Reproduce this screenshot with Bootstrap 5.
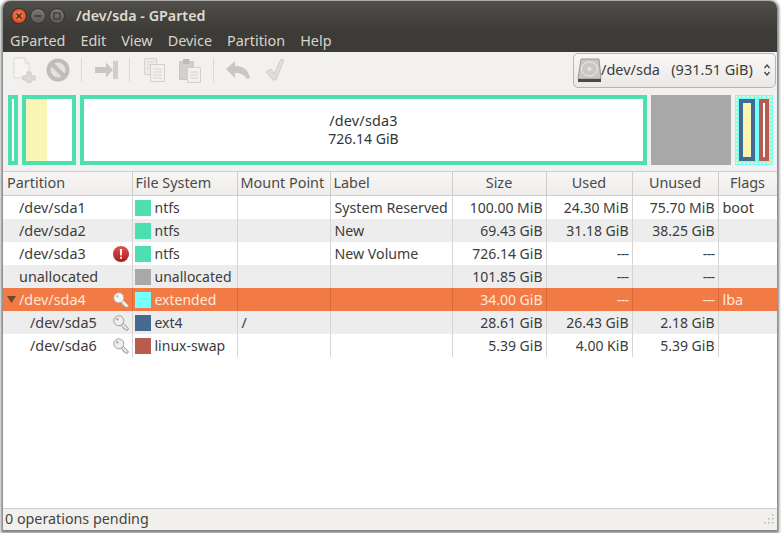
<!DOCTYPE html>
<html lang="en">
<head>
<meta charset="utf-8">
<title>/dev/sda - GParted</title>
<link href="https://cdn.jsdelivr.net/npm/bootstrap@5.3.0/dist/css/bootstrap.min.css" rel="stylesheet">
<style>
html,body{height:100%;}
body{margin:0;background:#fff;font-family:"Noto Sans","Open Sans",sans-serif;font-size:14.4px;overflow:hidden;color:#3c3c3c;}
.desk{height:533px;padding:1px 4px 3px 3px;}
.win{height:529px;background:#f2f1ef;border-radius:7px 7px 0 0;box-shadow:0 1px 3px 2px rgba(0,0,0,.5);overflow:hidden;}
.tbar{height:29px;background:linear-gradient(#514f4a,#3c3b37);color:#dfdbd2;padding-left:8px;}
.ttl{font-weight:600;font-size:14.3px;margin-left:8px;}
.wbtn{display:block;flex:none;margin-right:3px;}
.mbar{height:22px;background:#3c3b37;color:#d8d4ca;padding-left:7px;gap:15px;font-size:14.4px;}
.tools{height:36px;padding-left:10px;}
.tools svg{display:block;flex:none;}
.sepv{width:1px;height:24px;background:#dcdad6;flex:none;}
.m9{margin-left:9px}.m10{margin-left:10px}.m11{margin-left:11px}.m12{margin-left:12px}.m13{margin-left:13px}.m14{margin-left:14px}.m15{margin-left:15px}
.combo{width:203px;height:35px;margin-left:auto;margin-right:1px;border:1px solid #b8b5ae;border-radius:5px;background:linear-gradient(#f8f7f6,#ebe9e6);color:#3c3c3c;padding-left:3px;font-size:14.5px;}
.combo span{margin-left:-1px;}
.dmap{height:83px;padding:7px 0 0 5px;gap:4px;}
.pbox{height:70px;border:4px solid #4edfb0;background:#fff;flex:none;}
.pb1{width:10px}.pb2{width:54px;background:linear-gradient(90deg,#f9f5b4 21px,#fff 21px);}
.pb3{width:567px;line-height:18px;color:#333;padding-bottom:1px;}
.nm{font-size:14.4px;letter-spacing:.2px;}.sz{font-size:14px;}
.pb4{width:80px;background:#a8a8a8;border:0;}
.pb5{width:38px;border-color:#7ff;background:#7ff;gap:4px;padding:0;}
.pb5::before{content:"";position:absolute;inset:-3px;border:2px dotted #f3f0a8;}
.sd5{width:16px;height:62px;border:4px solid #466a8f;background:#f9f5b4;flex:none;}
.sd6{width:10px;height:62px;border:4px solid #b85c4f;background:#fff;flex:none;}
.gtab{background:#fff;margin:0;border-top:1px solid #cfcdc9;}
.gtab table{table-layout:fixed;width:774px;border-collapse:collapse;margin:0;font-size:14.4px;--bs-table-bg:transparent;color:#3c3c3c;}
.gtab th{height:23px;padding:0 3px 2px;font-weight:400;line-height:20px;background:linear-gradient(#f7f6f5,#eeedeb);border-right:1px solid #cfcdc9;border-bottom:1px solid #cfcdc9;color:#4a4a4a;white-space:nowrap;}
.gtab thead tr{height:22px;}
.gtab td{height:23px;padding:2px 3px 0 4px;border:0;border-right:1px solid #d6d5d2;white-space:nowrap;color:#3c3c3c;line-height:1;vertical-align:middle;overflow:hidden;}
.gtab td:has(.cel){padding-top:0;}
.gtab td.text-end{font-size:14px;}
.gtab td.fs{padding-left:2px;font-size:14px;}
.gtab td.lb{font-size:14.2px;}
.gtab tr.alt td{background:#ededed;}
.gtab tr.sel td{background:#f27a45;color:#fde9dc;border-right-color:#d96a3a;}
.gtab .cel{display:flex;align-items:center;height:23px;padding-top:1px;}
.gtab .cel.lvl1,.gtab .cel.lvl2{padding-top:2px;}
.gtab .cel svg.ico-r{margin-top:-1px;}
.lvl1{padding-left:12px;}.lvl2{padding-left:23px;}
.swt{width:16px;height:16px;flex:none;margin-right:4px;}
.dsh{letter-spacing:-.6px;}
.stat{height:22px;border-top:1px solid #cfcec8;background:#f1f0ed;padding:0 3px 2px 2px;font-size:14.3px;color:#444;}
.ico-r{margin-left:auto;flex:none;}
</style>
</head>
<body>
<svg width="0" height="0" class="position-absolute">
  <defs>
    <linearGradient id="redg" x1="0" y1="0" x2="0" y2="1"><stop offset="0" stop-color="#e0524d"/><stop offset="1" stop-color="#a81c1c"/></linearGradient>
    <linearGradient id="btng" x1="0" y1="0" x2="0" y2="1"><stop offset="0" stop-color="#7c7a74"/><stop offset="1" stop-color="#5c5a55"/></linearGradient>
    <radialGradient id="clg" cx=".5" cy=".45" r=".6"><stop offset="0" stop-color="#f58a62"/><stop offset="1" stop-color="#d5401a"/></radialGradient>
    <symbol id="keyw" viewBox="0 0 16 16"><path d="M10.200 8.300l5 4.700-.2 2-2 .3-.8-1-1 .1-.2-1.200-1.100-.2-.1-1.100-2.300-2z" fill="#f2f2f0" stroke="#b0aeaa" stroke-width=".8"/><circle cx="5.800" cy="5.800" r="5" fill="#f6f6f4" stroke="#b0aeaa" stroke-width=".8"/><circle cx="4.200" cy="4.200" r="1.200" fill="#c9c7c3"/></symbol>
    <symbol id="keyg" viewBox="0 0 16 16"><path d="M10.200 8.300l5 4.700-.2 2-2 .3-.8-1-1 .1-.2-1.200-1.100-.2-.1-1.100-2.300-2z" fill="#e4e4e2" stroke="#8f8e8b" stroke-width=".8"/><circle cx="5.800" cy="5.800" r="5" fill="#eeeeec" stroke="#8f8e8b" stroke-width=".8"/><circle cx="4.200" cy="4.200" r="1.200" fill="#a9a8a5"/></symbol>
  </defs>
</svg>
<div class="desk">
<div class="win d-flex flex-column">
  <div class="tbar d-flex align-items-center">
    <svg class="wbtn" width="16" height="16" viewBox="0 0 16 16"><circle cx="8" cy="8" r="7.500" fill="url(#clg)" stroke="#3a2a22"/><path d="M5.500 5.500l5 5M10.500 5.500l-5 5" stroke="#4a2014" stroke-width="1.200"/></svg>
    <svg class="wbtn" width="16" height="16" viewBox="0 0 16 16"><circle cx="8" cy="8" r="7.500" fill="url(#btng)" stroke="#34332f"/><path d="M4.500 8h7" stroke="#3a3935" stroke-width="1.300"/></svg>
    <svg class="wbtn" width="16" height="16" viewBox="0 0 16 16"><circle cx="8" cy="8" r="7.500" fill="url(#btng)" stroke="#34332f"/><rect x="5" y="5" width="6" height="6" fill="none" stroke="#3a3935" stroke-width="1.200"/></svg>
    <span class="ttl">/dev/sda - GParted</span>
  </div>
  <div class="mbar d-flex align-items-center">
    <span>GParted</span><span>Edit</span><span>View</span><span>Device</span><span>Partition</span><span>Help</span>
  </div>
  <div class="tools d-flex align-items-center">
    <svg width="24" height="26" viewBox="0 0 24 26"><path d="M1 1h11l4 5v15H1z" fill="#f6f5f3" stroke="#dbd9d5"/><path d="M12 1v5h4" fill="none" stroke="#dbd9d5"/><path d="M14 15h4v4h4v4h-4v3h-4v-3h-4v-4h4z" fill="#dddbd7" stroke="#cbc9c5"/></svg>
    <svg class="m9" width="24" height="24" viewBox="0 0 24 24"><circle cx="12" cy="12" r="9.500" fill="#e4e2df" stroke="#bfbdb9" stroke-width="4"/><path d="M5.500 5.500l13 13" stroke="#bfbdb9" stroke-width="4"/></svg>
    <span class="sepv m11"></span>
    <svg class="m13" width="24" height="22" viewBox="0 0 24 22"><path d="M0 8h11V3.500l7 7.500-7 7.500V14H0z" fill="#c9c7c3"/><path d="M18 2h5v18h-5z" fill="#d0cec9"/></svg>
    <span class="sepv m10"></span>
    <svg class="m14" width="21" height="24" viewBox="0 0 21 24"><path d="M.5.500h12v16H.5z" fill="#eceae7" stroke="#d6d4cf"/><path d="M3 4h7M3 7h7M3 10h7" stroke="#dad8d3"/><path d="M6.500 6.500h14v17h-14z" fill="#f3f1ef" stroke="#d2d0cb"/><path d="M9 11h9M9 14h9M9 17h9M9 20h9" stroke="#d6d4cf"/></svg>
    <svg class="m14" width="22" height="25" viewBox="0 0 22 25"><path d="M.5 3.500h14v18H.5z" fill="#d3d1cc" stroke="#c9c7c2"/><path d="M4 1h6.500v5H4z" fill="#bdbbb6"/><path d="M8.500 9.500h13v15h-13z" fill="#f3f1ef" stroke="#d2d0cb"/><path d="M11 14h8M11 17h8M11 20h8" stroke="#d6d4cf"/></svg>
    <span class="sepv m12"></span>
    <svg class="m12" width="24" height="20" viewBox="0 0 24 20"><path d="M0 9l9-8v5c8 0 13 3 15 12l-3 1c-3-5-7-6-12-6v5z" fill="#c9c7c3"/></svg>
    <svg class="m15" width="20" height="24" viewBox="0 0 20 24"><path d="M1 14l5-3 3 5 7-15 3 1-8 20h-3z" fill="#e0dedb" stroke="#d0cecb"/></svg>
    <div class="combo d-flex align-items-center">
      <svg width="25" height="25" viewBox="0 0 25 25"><path d="M4 1h18l2 20H1z" fill="#c9c8c5" stroke="#9a9996"/><ellipse cx="12.500" cy="11" rx="8" ry="7" fill="none" stroke="#eee"/><circle cx="12.500" cy="11" r="2" fill="#e6e6e4"/><path d="M1 21h23v3H1z" fill="#4a4a48"/></svg>
      <span>/dev/sda&nbsp;&nbsp;&nbsp;(931.51 GiB)</span>
      <svg class="ico-r me-1" width="8" height="14" viewBox="0 0 8 14"><path d="M1.500 5L4 2l2.500 3M1.500 9L4 12l2.500-3" fill="none" stroke="#444" stroke-width="1.300"/></svg>
    </div>
  </div>
  <div class="dmap d-flex">
    <div class="pbox pb1"></div>
    <div class="pbox pb2"></div>
    <div class="pbox pb3 d-flex flex-column align-items-center justify-content-center"><span class="nm">/dev/sda3</span><span class="sz">726.14 GiB</span></div>
    <div class="pbox pb4"></div>
    <div class="pbox pb5 position-relative d-flex align-items-center justify-content-center"><div class="sd5"></div><div class="sd6"></div></div>
  </div>
  <div class="gtab flex-grow-1">
    <table class="table">
      <colgroup><col style="width:129px"><col style="width:105px"><col style="width:93px"><col style="width:122px"><col style="width:94px"><col style="width:86px"><col style="width:86px"><col style="width:59px"></colgroup>
      <thead><tr><th class="ps-1">Partition</th><th>File System</th><th>Mount Point</th><th>Label</th><th class="text-center">Size</th><th class="text-center">Used</th><th class="text-center">Unused</th><th class="text-center">Flags</th></tr></thead>
      <tbody>
        <tr><td><div class="cel lvl1">/dev/sda1</div></td><td class="fs"><div class="cel"><i class="swt" style="background:#4edfb0"></i>ntfs</div></td><td></td><td class="lb">System Reserved</td><td class="text-end">100.00 MiB</td><td class="text-end">24.30 MiB</td><td class="text-end">75.70 MiB</td><td>boot</td></tr>
        <tr class="alt"><td><div class="cel lvl1">/dev/sda2</div></td><td class="fs"><div class="cel"><i class="swt" style="background:#4edfb0"></i>ntfs</div></td><td></td><td class="lb">New</td><td class="text-end">69.43 GiB</td><td class="text-end">31.18 GiB</td><td class="text-end">38.25 GiB</td><td></td></tr>
        <tr><td><div class="cel lvl1">/dev/sda3<svg class="ico-r" width="16" height="16" viewBox="0 0 16 16"><circle cx="8" cy="8" r="8" fill="url(#redg)"/><path d="M6.800 3h2.400l-.4 6.500H7.200zM7 10.800h2v2H7z" fill="#fff"/></svg></div></td><td class="fs"><div class="cel"><i class="swt" style="background:#4edfb0"></i>ntfs</div></td><td></td><td class="lb">New Volume</td><td class="text-end">726.14 GiB</td><td class="text-end"><span class="dsh">---</span></td><td class="text-end"><span class="dsh">---</span></td><td></td></tr>
        <tr class="alt"><td><div class="cel lvl1">unallocated</div></td><td class="fs"><div class="cel"><i class="swt" style="background:#a8a8a8"></i>unallocated</div></td><td></td><td></td><td class="text-end">101.85 GiB</td><td class="text-end"><span class="dsh">---</span></td><td class="text-end"><span class="dsh">---</span></td><td></td></tr>
        <tr class="sel"><td><div class="cel lvl1 position-relative"><svg class="position-absolute" style="left:0;top:8px" width="9" height="7" viewBox="0 0 9 7"><path d="M0 0h9L4.500 7z" fill="#6b4a2a"/></svg>/dev/sda4<svg class="ico-r" width="16" height="16"><use href="#keyw"/></svg></div></td><td class="fs"><div class="cel"><i class="swt" style="background:#7ff"></i>extended</div></td><td></td><td></td><td class="text-end">34.00 GiB</td><td class="text-end"><span class="dsh">---</span></td><td class="text-end"><span class="dsh">---</span></td><td>lba</td></tr>
        <tr class="alt"><td><div class="cel lvl2">/dev/sda5<svg class="ico-r" width="16" height="16"><use href="#keyg"/></svg></div></td><td class="fs"><div class="cel"><i class="swt" style="background:#466a8f"></i>ext4</div></td><td>/</td><td></td><td class="text-end">28.61 GiB</td><td class="text-end">26.43 GiB</td><td class="text-end">2.18 GiB</td><td></td></tr>
        <tr><td><div class="cel lvl2">/dev/sda6<svg class="ico-r" width="16" height="16"><use href="#keyg"/></svg></div></td><td class="fs"><div class="cel"><i class="swt" style="background:#b85c4f"></i>linux-swap</div></td><td></td><td></td><td class="text-end">5.39 GiB</td><td class="text-end">4.00 KiB</td><td class="text-end">5.39 GiB</td><td></td></tr>
      </tbody>
    </table>
  </div>
  <div class="stat d-flex align-items-center justify-content-between"><span>0 operations pending</span>
    <svg width="14" height="14" viewBox="0 0 14 14"><path d="M12 2h1.500v1.500H12zM12 6h1.500v1.500H12zM8 6h1.500v1.500H8zM12 10h1.500v1.500H12zM8 10h1.500v1.500H8zM4 10h1.500v1.500H4z" fill="#b5b3af"/></svg></div>
</div>
</div>
<script src="https://cdn.jsdelivr.net/npm/bootstrap@5.3.0/dist/js/bootstrap.bundle.min.js"></script>
</body>
</html>
